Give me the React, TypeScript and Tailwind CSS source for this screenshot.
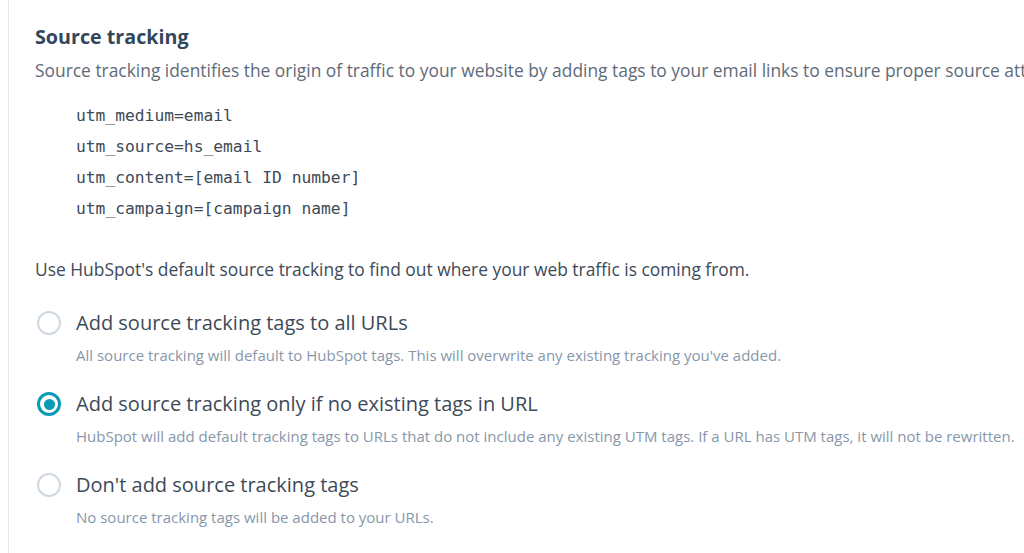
import React from 'react';

interface OptionProps {
  label: string;
  hint: string;
  checked?: boolean;
}

const RadioOption: React.FC<OptionProps> = ({ label, hint, checked }) => {
  return (
    <div className="flex flex-col">
      <div className="flex items-center h-[30px]">
        {checked ? (
          <span className="ml-[2px] w-6 h-6 shrink-0 rounded-full border-[3px] border-[#0b9bb5] flex items-center justify-center">
            <span className="w-[11px] h-[11px] rounded-full bg-[#0b9bb5]" />
          </span>
        ) : (
          <span className="ml-[2px] w-6 h-6 shrink-0 rounded-full border-2 border-[#cfd8e2]" />
        )}
        <span className="ml-[15px] text-[20px] text-[#3d4a58] whitespace-nowrap">{label}</span>
      </div>
      <div className="pl-[41px] mt-[7px] leading-[20px] text-[15px] text-[#8797aa] whitespace-nowrap">{hint}</div>
    </div>
  );
};

const App: React.FC = () => {
  return (
    <div className="w-[1024px] h-[553px] overflow-hidden bg-white font-['Open_Sans',sans-serif]">
      <div className="ml-2 h-full border-l border-[#e3e8ee] pl-[26px] pt-[22px]">
        <h2 className="text-[19.7px] font-bold text-[#33475b] leading-[30px]">Source tracking</h2>
        <p className="mt-[6px] text-[17.4px] text-[#5f6b79] whitespace-nowrap leading-[24px]">
          Source tracking identifies the origin of traffic to your website by adding tags to your email links to ensure proper source attribution.
        </p>
        <div className="mt-[18px] pl-[41px] font-['DejaVu_Sans_Mono',monospace] text-[16.3px] text-[#3d4a58] flex flex-col">
          <span className="leading-[31px]">utm_medium=email</span>
          <span className="leading-[31px]">utm_source=hs_email</span>
          <span className="leading-[31px]">utm_content=[email ID number]</span>
          <span className="leading-[31px]">utm_campaign=[campaign name]</span>
        </div>
        <p className="mt-[33px] text-[17.4px] text-[#3d4a58] whitespace-nowrap leading-[24px]">
          Use HubSpot's default source tracking to find out where your web traffic is coming from.
        </p>
        <div className="mt-[27px] flex flex-col gap-[24px]">
          <RadioOption
            label="Add source tracking tags to all URLs"
            hint="All source tracking will default to HubSpot tags. This will overwrite any existing tracking you've added."
          />
          <RadioOption
            checked
            label="Add source tracking only if no existing tags in URL"
            hint="HubSpot will add default tracking tags to URLs that do not include any existing UTM tags. If a URL has UTM tags, it will not be rewritten."
          />
          <RadioOption
            label="Don't add source tracking tags"
            hint="No source tracking tags will be added to your URLs."
          />
        </div>
      </div>
    </div>
  );
};

export default App;
